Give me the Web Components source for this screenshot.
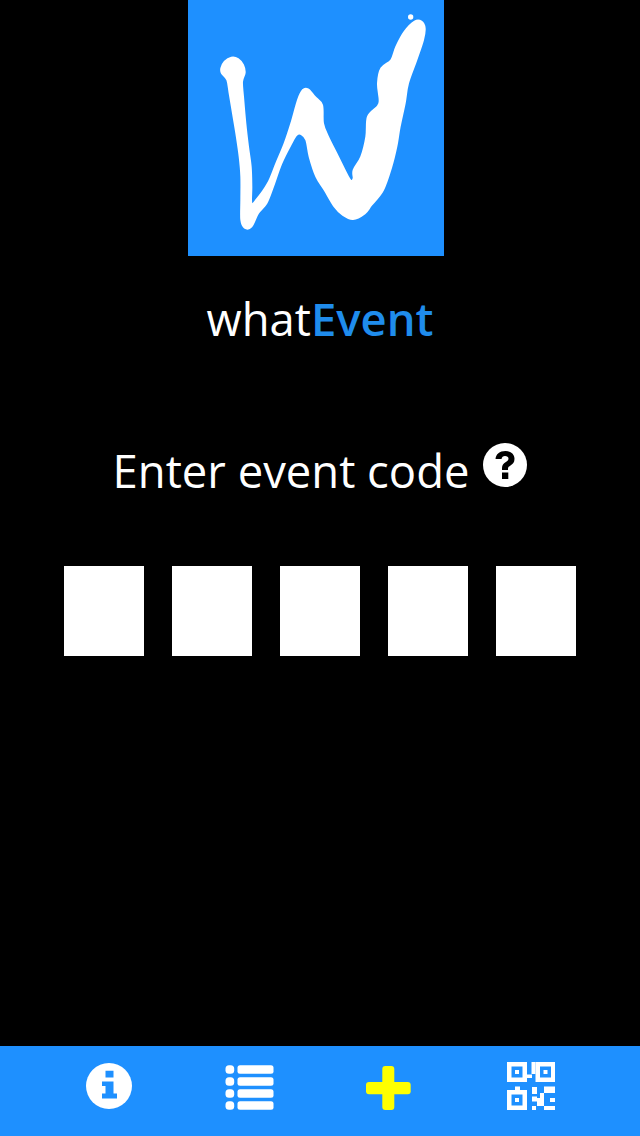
<!DOCTYPE html>
<html><head><meta charset="utf-8">
<style>
html,body{margin:0;padding:0;background:#000;height:100%}
body{width:640px;height:1136px;overflow:hidden;font-family:"Open Sans",sans-serif;color:#fff}
</style></head><body>
<event-screen>
  <app-logo></app-logo>
  <app-title><span>what</span><b>Event</b></app-title>
  <code-prompt>Enter event code</code-prompt>
  <code-boxes><code-box></code-box><code-box></code-box><code-box></code-box><code-box></code-box><code-box></code-box></code-boxes>
  <nav-bar slot="footer">
    <nav-item kind="info"></nav-item>
    <nav-item kind="list"></nav-item>
    <nav-item kind="plus"></nav-item>
    <nav-item kind="qr"></nav-item>
  </nav-bar>
</event-screen>
<script>
function def(name,css,html,init){
  customElements.define(name,class extends HTMLElement{
    constructor(){super();const r=this.attachShadow({mode:'open'});r.innerHTML='<style>'+css+'</style>'+html;}
    connectedCallback(){if(init)init(this);}
  });
}
function smooth(p){
  const n=p.length,f=v=>v.toFixed(1);let d='M'+p[0][0]+' '+p[0][1];
  for(let i=0;i<n;i++){
    const a=p[(i-1+n)%n],b=p[i],c=p[(i+1)%n],e=p[(i+2)%n];
    d+='C'+f(b[0]+(c[0]-a[0])/6)+' '+f(b[1]+(c[1]-a[1])/6)+' '+f(c[0]-(e[0]-b[0])/6)+' '+f(c[1]-(e[1]-b[1])/6)+' '+c[0]+' '+c[1];
  }
  return d+'Z';
}
const W=[[100,205],[110,185],[130,173],[150,177],[165,195],[170,218],[162,245],[165,290],[172,370],[180,440],[188,500],[190,560],[190,610],[205,600],[240,550],[265,490],[290,430],[310,370],[330,300],[345,270],[360,268],[380,290],[402,315],[405,370],[420,410],[450,470],[480,530],[490,543],[497,535],[497,510],[520,470],[535,410],[540,350],[570,318],[575,300],[570,250],[580,205],[610,180],[625,140],[650,95],[680,65],[700,65],[710,85],[705,120],[685,180],[660,250],[650,310],[635,380],[625,440],[610,500],[585,570],[550,615],[530,640],[495,657],[465,645],[440,620],[410,570],[385,530],[365,470],[355,420],[340,402],[325,405],[310,430],[280,490],[255,560],[235,610],[210,640],[190,680],[170,683],[160,660],[160,600],[160,530],[155,470],[145,400],[135,340],[125,280],[118,240],[102,220]];
def('event-screen',':host{display:flex;flex-direction:column;align-items:center;width:640px;height:1136px;background:#000}.main{flex:1;display:flex;flex-direction:column;align-items:center;width:100%}','<div class="main"><slot></slot></div><slot name="footer"></slot>');
def('app-logo',':host{display:block;width:256px;height:256px;background:#1e90ff;margin-right:8px;flex:none}svg{display:block;width:256px;height:256px}',
'<svg viewBox="0 0 768 768"><path fill="#fff" stroke="#fff" stroke-width="6" stroke-linejoin="round" d="'+smooth(W)+'"/><circle cx="668" cy="51" r="8" fill="#fff"/></svg>');
def('app-title',':host{display:block;margin-top:32px;font-size:45.4px;line-height:60px;color:#fff;white-space:nowrap}::slotted(b){color:#1f8cec;font-weight:600}','<slot></slot>');
def('code-prompt',':host{display:flex;align-items:flex-start;margin-top:92px;font-size:45.4px;line-height:60px;color:#fff;white-space:nowrap}svg{display:block;width:44px;height:44px;margin:3px 0 0 14px}',
'<slot></slot><svg viewBox="0 0 44 44"><circle cx="22" cy="22" r="22" fill="#fff"/><path fill="#000" d="M22.5 8C16.5 8 13 11 12.500 16H18.500C18.900 14 20 13 22 13C24 13 25.500 14 25.500 15.800C25.500 17.500 24 18.300 22.500 19.300C20.500 20.600 19 22 19 25V27H25V25.500C25 24.200 26 23.500 27.500 22.500C29.800 21 31.500 19.500 31.500 15.800C31.500 11 27.500 8 22.500 8ZM19 29.500H25.300V36H19Z"/></svg>');
def('code-boxes',':host{display:flex;gap:28px;margin-top:66px}','<slot></slot>');
def('code-box',':host{display:block;width:80px;height:90px;background:#fff}','');
def('nav-bar',':host{display:flex;align-items:flex-start;width:640px;height:90px;background:#1e90ff;flex:none;box-sizing:border-box;padding-left:86px}','<slot></slot>');
const Q=(x,y,w,h)=>`<rect x="${x}" y="${y}" width="${w}" height="${h}"/>`;
const row=y=>`<rect x="0.500" y="${y}" width="8.700" height="8.500" rx="3.500"/><rect x="12.500" y="${y}" width="36" height="8.500" rx="2.500"/>`;
const fnd=(x,y)=>`<path fill-rule="evenodd" d="M${x} ${y}h20v20h-20zM${x+4.5} ${y+4.5}v11h11v-11z"/>`+Q(x+8,y+8,4,4);
const icons={
 info:{w:46,h:46,ml:0,mt:17,svg:'<circle cx="23" cy="23" r="23" fill="#fff"/><path fill="#1e90ff" d="M19.500 7.700H27.500V14.500H19.500ZM16 18.500H27.500V30.500H31V35.500H16V30.500H19.500V23H16Z"/>'},
 list:{w:50,h:45,ml:93,mt:19,svg:'<g fill="#fff">'+row(0.3)+row(12.3)+row(24.3)+row(36.3)+'</g>'},
 plus:{w:45,h:44,ml:91,mt:20,svg:'<g fill="#ff0"><rect x="16.300" y="0" width="12" height="44" rx="3"/><rect x="0" y="16" width="44.700" height="12.300" rx="3"/></g>'},
 qr:{w:48,h:48,ml:96,mt:16,svg:'<g fill="#fff">'+fnd(0,0)+fnd(28.500,0)+fnd(0,28)+Q(24.5,0,4,12)+Q(19,12.500,6,3.500)+Q(8,24.500,5,3.500)+Q(37,24.500,11,6.500)+Q(25,25,5,7)+Q(25,34.500,5,5)+Q(30,36,7,8)+Q(33,31,4,5)+Q(43,36,5,4)+Q(25,44,4,4)+Q(37,44,11,4)+'</g>'}
};
def('nav-item',':host{display:block;flex:none}svg{display:block}','',el=>{
 const k=icons[el.getAttribute('kind')];
 el.style.marginLeft=k.ml+'px';el.style.marginTop=k.mt+'px';
 el.shadowRoot.innerHTML+=`<svg width="${k.w}" height="${k.h}" viewBox="0 0 ${k.w} ${k.h}">${k.svg}</svg>`;
});
</script>
</body></html>
